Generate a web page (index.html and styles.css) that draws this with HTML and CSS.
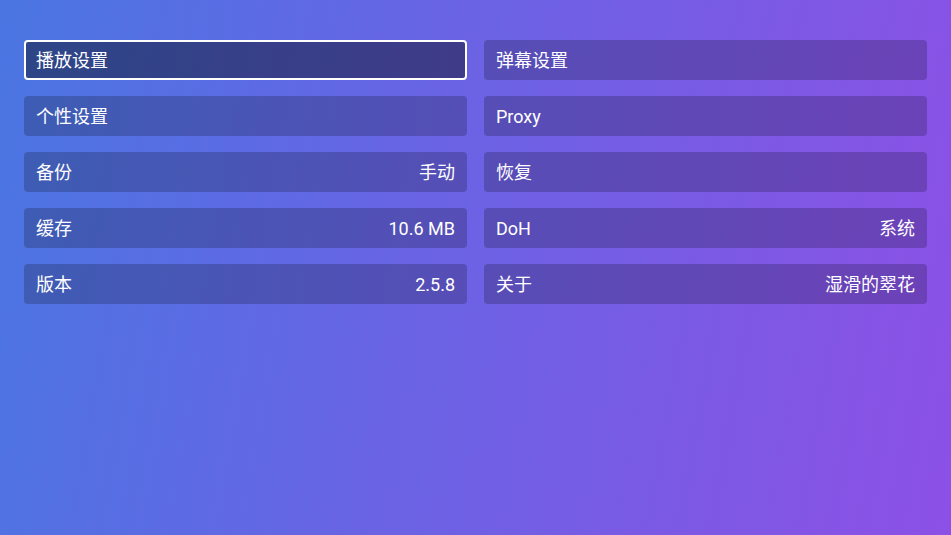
FILE: index.html
```html
<!DOCTYPE html>
<html lang="zh">
<head>
<meta charset="utf-8">
<link rel="stylesheet" href="styles.css">
</head>
<body>
<div class="page">
  <div class="grid">
    <div class="item focused"><span>播放设置</span></div>
    <div class="item"><span>弹幕设置</span></div>
    <div class="item"><span>个性设置</span></div>
    <div class="item"><span>Proxy</span></div>
    <div class="item"><span>备份</span><span>手动</span></div>
    <div class="item"><span>恢复</span></div>
    <div class="item"><span>缓存</span><span>10.6 MB</span></div>
    <div class="item"><span>DoH</span><span>系统</span></div>
    <div class="item"><span>版本</span><span>2.5.8</span></div>
    <div class="item"><span>关于</span><span>湿滑的翠花</span></div>
  </div>
</div>
</body>
</html>
```
FILE: styles.css
```css
html, body {
  margin: 0;
  padding: 0;
  width: 951px;
  height: 535px;
  overflow: hidden;
}
body {
  font-family: Roboto, "Noto Sans CJK SC", sans-serif;
  color: #ffffff;
  background: linear-gradient(100deg, #4a76e2 0%, #6a63e4 45%, #8c50e6 100%);
}
.page {
  padding: 40px 24px 0 24px;
}
.grid {
  display: grid;
  grid-template-columns: 443px 443px;
  column-gap: 17px;
  row-gap: 16px;
}
.item {
  height: 40px;
  box-sizing: border-box;
  padding: 2px 12px 0 12px;
  border-radius: 4px;
  background: rgba(0, 0, 0, 0.2);
  display: flex;
  align-items: center;
  justify-content: space-between;
  font-size: 18px;
  line-height: 1;
}
.item.focused {
  background: rgba(0, 0, 0, 0.4);
  border: 2px solid #ffffff;
  padding: 2px 10px 0 10px;
}
```
